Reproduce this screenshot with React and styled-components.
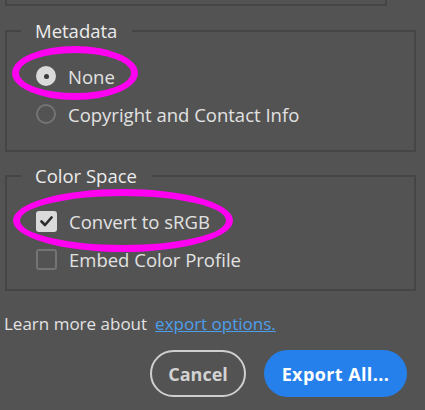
import React from "react";
import styled, { createGlobalStyle } from "styled-components";

const Global = createGlobalStyle`
  html, body {
    margin: 0;
    padding: 0;
    background: #535353;
  }
  body {
    font-family: "Open Sans", "Noto Sans", sans-serif;
  }
`;

const Page = styled.div`
  position: relative;
  width: 425px;
  height: 410px;
  background: #535353;
  overflow: hidden;
`;

const ScrollArea = styled.div`
  display: flex;
  height: 331px;
`;

const Content = styled.div`
  flex: 1;
  padding-left: 5px;
`;

const Scrollbar = styled.div`
  width: 20px;
  margin-left: 15px;
  background: #474747;
  display: flex;
  flex-direction: column;
  padding-left: 4px;
  box-sizing: border-box;
`;

const Thumb = styled.div`
  flex: 1;
  width: 15px;
  background: #6b6b6b;
`;

const ArrowBox = styled.div`
  height: 18px;
  display: flex;
  align-items: center;
  justify-content: center;
  width: 15px;
`;

const RightEdge = styled.div`
  width: 3px;
  background: #5a5a5a;
`;

const PrevGroupEnd = styled.div`
  width: 378px;
  height: 4px;
  border: 2px solid #454545;
  border-top: none;
`;

const Group = styled.fieldset`
  width: 378px;
  margin: ${({ $top }) => $top}px 0 0 0;
  padding: 14px 0 ${({ $bottom }) => $bottom}px 29px;
  border: 2px solid #454545;
  box-sizing: content-box;
`;

const Legend = styled.legend`
  margin-left: -15px;
  padding: 0 15px 0 14px;
  font-size: 18.5px;
  line-height: 24px;
  color: #ececec;
`;

const Row = styled.label`
  display: flex;
  align-items: center;
  gap: 12px;
  height: 38px;
  font-size: 18.5px;
  color: #e2e2e2;
`;

const Radio = styled.span`
  width: 20px;
  height: 20px;
  border-radius: 50%;
  box-sizing: border-box;
  display: flex;
  align-items: center;
  justify-content: center;
  background: ${({ $on }) => ($on ? "#dadada" : "transparent")};
  border: ${({ $on }) => ($on ? "none" : "2px solid #747474")};
  &::after {
    content: "";
    display: ${({ $on }) => ($on ? "block" : "none")};
    width: 5px;
    height: 5px;
    border-radius: 50%;
    background: #3a3a3a;
  }
`;

const Box = styled.span`
  width: 21px;
  height: 21px;
  border-radius: 3px;
  box-sizing: border-box;
  display: flex;
  align-items: center;
  justify-content: center;
  background: ${({ $on }) => ($on ? "#dadada" : "transparent")};
  border: ${({ $on }) => ($on ? "none" : "2px solid #747474")};
`;

const Learn = styled.div`
  margin-top: 21px;
  margin-left: -1px;
  font-size: 17px;
  line-height: 24px;
  color: #e2e2e2;
  display: flex;
  gap: 8px;
`;

const Link = styled.a`
  color: #4d9fec;
  text-decoration: underline;
  cursor: pointer;
`;

const Footer = styled.div`
  display: flex;
  justify-content: flex-end;
  gap: 18px;
  padding: 19px 18px 0 0;
`;

const Button = styled.button`
  width: ${({ $primary }) => ($primary ? 143 : 96)}px;
  height: 47px;
  border-radius: 24px;
  font-family: "Open Sans", "Noto Sans", sans-serif;
  font-weight: 700;
  font-size: 18px;
  letter-spacing: ${({ $primary }) => ($primary ? 0.4 : 0)}px;
  box-sizing: border-box;
  padding: 0;
  background: ${({ $primary }) => ($primary ? "#2680eb" : "transparent")};
  color: ${({ $primary }) => ($primary ? "#ffffff" : "#d2d2d2")};
  border: ${({ $primary }) => ($primary ? "none" : "2px solid #cfcfcf")};
`;

const Ring = styled.div`
  position: absolute;
  left: ${({ $x }) => $x}px;
  top: ${({ $y }) => $y}px;
  width: ${({ $w }) => $w}px;
  height: ${({ $h }) => $h}px;
  border: 7px solid #ff00f0;
  border-radius: 50%;
  box-sizing: border-box;
  pointer-events: none;
`;

export default function App() {
  return (
    <Page>
      <Global />
      <ScrollArea>
        <Content>
          <PrevGroupEnd />
          <Group $top={13} $bottom={17}>
            <Legend>Metadata</Legend>
            <Row>
              <Radio $on />
              None
            </Row>
            <Row>
              <Radio />
              Copyright and Contact Info
            </Row>
          </Group>
          <Group $top={12} $bottom={11}>
            <Legend>Color Space</Legend>
            <Row>
              <Box $on>
                <svg width="13" height="11" viewBox="0 0 13 11">
                  <path d="M1.5 5.5 L5 9 L11.5 1.5" fill="none" stroke="#2b2b2b" strokeWidth="2.6" strokeLinecap="round" strokeLinejoin="round" />
                </svg>
              </Box>
              Convert to sRGB
            </Row>
            <Row>
              <Box />
              Embed Color Profile
            </Row>
          </Group>
          <Learn>
            Learn more about <Link>export options.</Link>
          </Learn>
        </Content>
        <Scrollbar>
          <Thumb />
          <ArrowBox>
            <svg width="10" height="6" viewBox="0 0 10 6">
              <path d="M1 1 L5 5 L9 1" fill="none" stroke="#9a9a9a" strokeWidth="1.2" />
            </svg>
          </ArrowBox>
        </Scrollbar>
        <RightEdge />
      </ScrollArea>
      <Footer>
        <Button>Cancel</Button>
        <Button $primary>Export All...</Button>
      </Footer>
      <Ring $x={12} $y={46} $w={126} $h={54} />
      <Ring $x={13} $y={189} $w={220} $h={63} />
    </Page>
  );
}
